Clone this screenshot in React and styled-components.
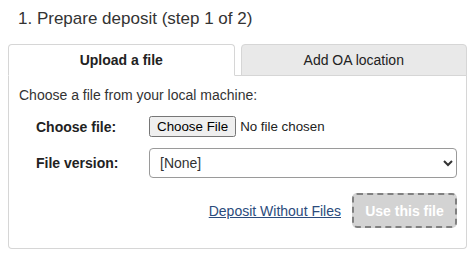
import styled, { createGlobalStyle } from "styled-components";

const GlobalStyle = createGlobalStyle`
  html, body {
    margin: 0;
    padding: 0;
    background: #fff;
  }
  body {
    font-family: "Liberation Sans", Arial, sans-serif;
    color: #333;
  }
`;

const Root = styled.div`
  padding: 8px 7px 0 8px;
`;

const Title = styled.h2`
  margin: 0 0 14px 10px;
  font-size: 17px;
  font-weight: 400;
  line-height: 22px;
  color: #333;
`;

const TabList = styled.div`
  display: flex;
  gap: 6px;
  border-bottom: 1px solid #d6d6d6;
`;

const Tab = styled.div`
  flex: 1;
  height: 30px;
  margin-bottom: -1px;
  display: flex;
  align-items: center;
  justify-content: center;
  font-size: 14px;
  font-weight: ${(p) => (p.$active ? 700 : 400)};
  color: #222;
  background: ${(p) => (p.$active ? "#fff" : "#e9e9e9")};
  border: 1px solid #d6d6d6;
  border-bottom-color: ${(p) => (p.$active ? "#fff" : "#d6d6d6")};
  border-radius: 4px 4px 0 0;
`;

const Panel = styled.div`
  border: 1px solid #d6d6d6;
  border-top: none;
  border-radius: 0 0 4px 4px;
  padding: 10px 9px 20px 10px;
  font-size: 14px;
`;

const Intro = styled.p`
  margin: 0 0 12px;
  line-height: 18px;
`;

const Form = styled.div`
  display: grid;
  grid-template-columns: 113px 1fr;
  row-gap: 11px;
  align-items: center;
  padding-left: 17px;
`;

const Label = styled.label`
  font-weight: 700;
  color: #222;
`;

const FileInput = styled.input`
  font-family: "Liberation Sans", Arial, sans-serif;
  font-size: 13.333px;
  color: #222;
`;

const Select = styled.select`
  height: 30px;
  width: 100%;
  padding: 0 6px;
  font-family: "Liberation Sans", Arial, sans-serif;
  font-size: 14px;
  color: #333;
  background: #fff;
  border: 1px solid #9a9a9a;
  border-radius: 4px;
`;

const Actions = styled.div`
  margin-top: 15px;
  display: flex;
  justify-content: flex-end;
  align-items: center;
  gap: 11px;
`;

const TextLink = styled.a`
  color: #2b4b7c;
  text-decoration: underline;
  font-size: 14px;
`;

const Submit = styled.button`
  width: 105px;
  height: 35px;
  font-family: "Liberation Sans", Arial, sans-serif;
  font-size: 14px;
  font-weight: 700;
  color: #fff;
  background: #d3d3d3;
  border: 2px dashed #808080;
  border-radius: 5px;
`;

export default function App() {
  return (
    <Root>
      <GlobalStyle />
      <Title>1. Prepare deposit (step 1 of 2)</Title>
      <TabList>
        <Tab $active>Upload a file</Tab>
        <Tab>Add OA location</Tab>
      </TabList>
      <Panel>
        <Intro>Choose a file from your local machine:</Intro>
        <Form>
          <Label>Choose file:</Label>
          <div>
            <FileInput type="file" />
          </div>
          <Label>File version:</Label>
          <Select defaultValue="none">
            <option value="none">[None]</option>
          </Select>
        </Form>
        <Actions>
          <TextLink href="#">Deposit Without Files</TextLink>
          <Submit disabled>Use this file</Submit>
        </Actions>
      </Panel>
    </Root>
  );
}
